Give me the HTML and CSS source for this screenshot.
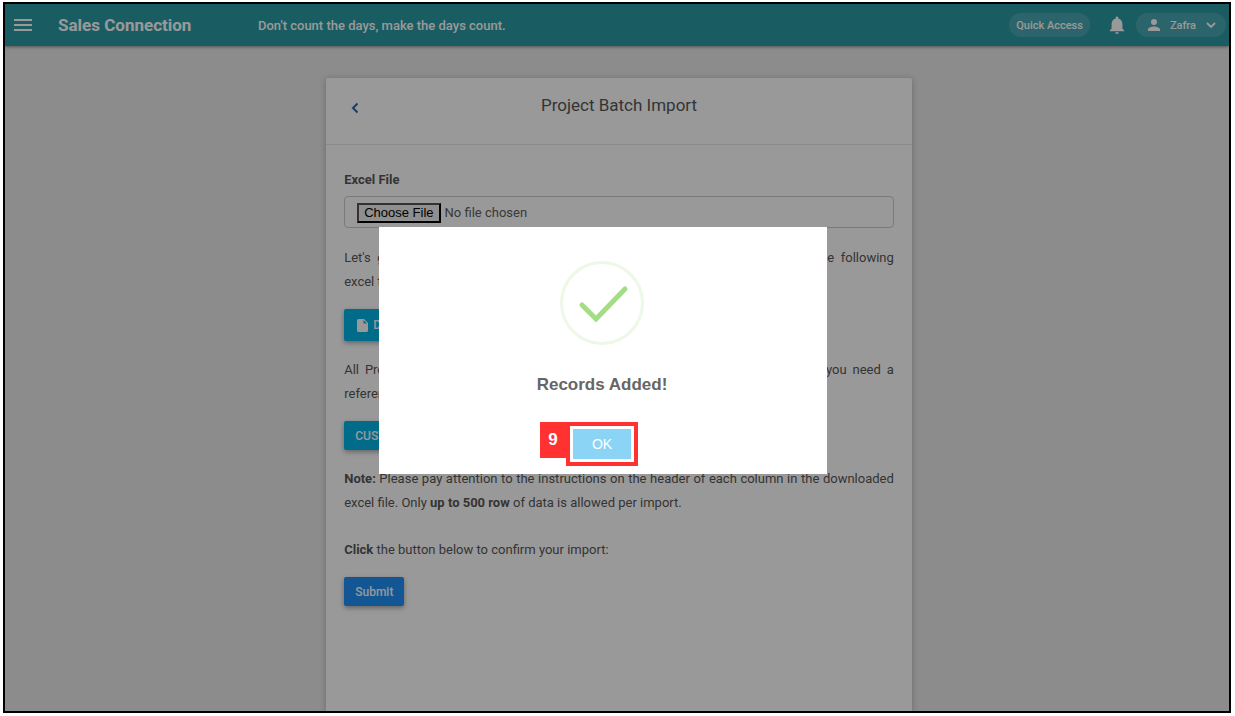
FILE: index.html
```html
<!DOCTYPE html>
<html lang="en">
<head>
<meta charset="utf-8">
<meta name="viewport" content="width=device-width, initial-scale=1">
<title>Project Batch Import</title>
<link rel="stylesheet" href="styles.css">
</head>
<body>
<div class="frame">
  <header class="topbar">
    <button class="menu-button" type="button" aria-label="Menu">
      <svg width="18" height="14" viewBox="0 0 18 14" aria-hidden="true"><path d="M0 1h18v2H0zM0 6h18v2H0zM0 11h18v2H0z" fill="currentColor"/></svg>
    </button>
    <div class="brand">Sales Connection</div>
    <div class="quote">Don't count the days, make the days count.</div>
    <button class="pill quick" type="button">Quick Access</button>
    <button class="bell" type="button" aria-label="Notifications">
      <svg width="16" height="18" viewBox="0 0 16 20" aria-hidden="true"><path d="M8 20a2 2 0 0 0 2-2H6a2 2 0 0 0 2 2zm6-6V9c0-3-1.600-5.600-4.500-6.300V2a1.500 1.500 0 0 0-3 0v.700C3.600 3.400 2 5.900 2 9v5l-2 2v1h16v-1z" fill="currentColor"/></svg>
    </button>
    <button class="pill user" type="button">
      <svg width="12" height="12" viewBox="0 0 12 12" aria-hidden="true"><path d="M6 6a3 3 0 1 0 0-6 3 3 0 0 0 0 6zm0 1.500c-2 0-6 1-6 3V12h12v-1.500c0-2-4-3-6-3z" fill="currentColor"/></svg>
      <span>Zafra</span>
      <svg width="10" height="6" viewBox="0 0 10 6" aria-hidden="true"><path d="M1 1l4 4 4-4" fill="none" stroke="currentColor" stroke-width="1.800"/></svg>
    </button>
  </header>

  <main class="page">
    <section class="card">
      <div class="card-head">
        <a class="back" href="#" aria-label="Back">
          <svg width="8" height="12" viewBox="0 0 8 12" aria-hidden="true"><path d="M6.500 1.500L2 6l4.500 4.500" fill="none" stroke="currentColor" stroke-width="2"/></svg>
        </a>
        <h1 class="card-title">Project Batch Import</h1>
      </div>
      <form class="card-body">
        <label class="label" for="excel">Excel File</label>
        <input class="file" id="excel" type="file">
        <p class="text">Let's get started by filling in your project data with our template. Download the following excel&nbsp;template:</p>
        <button class="btn info tall" type="button">
          <svg width="11" height="13" viewBox="0 0 11 13" aria-hidden="true"><path d="M1.500 0H7l4 4v7.500a1.500 1.500 0 0 1-1.500 1.500h-8A1.500 1.500 0 0 1 0 11.500v-10A1.500 1.500 0 0 1 1.500 0zM6.500 1v3.500H10z" fill="currentColor" fill-rule="evenodd"/></svg>
          DOWNLOAD
        </button>
        <p class="text">All Projects must be linked to a valid customer. Download the customer list if you need a reference:</p>
        <button class="btn info" type="button">CUSTOMER LIST</button>
        <p class="text note"><b>Note:</b> Please pay attention to the instructions on the header of each column in the downloaded excel file. Only <b>up to 500 row</b> of data is allowed per import.</p>
        <p class="text confirm"><b>Click</b> the button below to confirm your import:</p>
        <button class="btn primary" type="button">Submit</button>
      </form>
    </section>
  </main>

  <div class="overlay">
    <div class="modal" role="dialog" aria-modal="true" aria-labelledby="modal-title">
      <svg class="success" width="84" height="84" viewBox="0 0 84 84" aria-hidden="true">
        <circle cx="42" cy="42" r="40.500" fill="none" stroke="#edf8e7" stroke-width="3"/>
        <path d="M22 44l14 14 29-30" fill="none" stroke="#a5dc86" stroke-width="5" stroke-linecap="round" stroke-linejoin="miter"/>
      </svg>
      <h2 class="modal-title" id="modal-title">Records Added!</h2>
      <div class="marked">
        <span class="step">9</span>
        <button class="ok" type="button">OK</button>
      </div>
    </div>
  </div>
</div>
</body>
</html>
```
FILE: styles.css
```css
* {
  box-sizing: border-box;
}

body {
  display: flex;
  min-height: 100vh;
  margin: 0;
  padding: 2px 4px 3px 3px;
  background: #fff;
  color: #585858;
  font: 13px/23px Roboto, sans-serif;
}

button {
  border: 0;
  font-family: inherit;
  cursor: pointer;
}

svg {
  display: block;
  flex: none;
}

.frame {
  position: relative;
  display: flex;
  flex: 1;
  flex-direction: column;
  overflow: hidden;
  border: 2px solid #000;
  background: #e9e9e9;
}

.topbar {
  display: flex;
  align-items: center;
  height: 42px;
  padding: 0 3px 0 9px;
  background: #2a9ba5;
  box-shadow: 0 1px 3px rgba(0, 0, 0, 0.4);
  color: #fff;
}

.menu-button,
.bell {
  padding: 0;
  background: none;
  color: inherit;
}

.brand {
  width: 200px;
  margin-left: 26px;
  font-size: 17px;
  font-weight: 700;
}

.quote {
  flex: 1;
  font-size: 13px;
  font-weight: 500;
}

.pill {
  display: flex;
  align-items: center;
  height: 24px;
  padding: 0 7px;
  border-radius: 12px;
  background: rgba(255, 255, 255, 0.15);
  color: inherit;
  font-size: 11px;
  font-weight: 500;
}

.bell {
  margin: 0 11px 0 19px;
}

.user {
  gap: 10px;
  padding: 0 10px 0 12px;
}

.page {
  display: flex;
  flex: 1;
  justify-content: center;
  padding: 32px 0 0 4px;
}

.card {
  width: 48%;
  border-radius: 2px 2px 0 0;
  background: #fff;
  box-shadow: 0 1px 6px rgba(0, 0, 0, 0.25);
}

.card-head {
  display: grid;
  grid-template-columns: 24px 1fr 24px;
  height: 67px;
  padding: 16px 25px 0;
  border-bottom: 1px solid #e6e6e6;
}

.back {
  padding-top: 8px;
  color: #2468b0;
}

.card-title {
  margin: 0;
  font-size: 17px;
  font-weight: 400;
  line-height: 23px;
  text-align: center;
}

.card-body {
  display: flex;
  flex-direction: column;
  align-items: flex-start;
  padding: 23px 18px 24px;
}

.label {
  margin-bottom: 5px;
  font-weight: 700;
}

.file {
  width: 100%;
  height: 32px;
  margin-bottom: 18px;
  padding: 6px 12px;
  border: 1px solid #ccc;
  border-radius: 4px;
  color: #606060;
  font: 13px/20px Roboto, sans-serif;
}

.file::file-selector-button {
  height: 20px;
  padding: 0 5px;
  border: 2px outset #000;
  border-radius: 0;
  background: #efefef;
  color: #000;
  font: 13px/16px "Liberation Sans", Arial, sans-serif;
}

.text {
  width: 100%;
  margin: 0 0 15px;
  line-height: 24px;
  text-align: justify;
}

.text.note {
  margin-bottom: 23px;
}

.btn {
  display: flex;
  align-items: center;
  gap: 5px;
  height: 29px;
  margin-bottom: 17px;
  padding: 0 11px;
  border-radius: 2px;
  box-shadow: 0 2px 5px rgba(0, 0, 0, 0.35);
  color: #fff;
  font-size: 12px;
  font-weight: 500;
}

.btn.tall {
  height: 32px;
  padding: 0 13px;
}

.info {
  background: #00b5e5;
}

.primary {
  background: #1e90f5;
}

.overlay {
  position: absolute;
  inset: 0;
  display: flex;
  align-items: center;
  justify-content: center;
  padding: 0 28px 14px 0;
  background: rgba(0, 0, 0, 0.4);
}

.modal {
  display: flex;
  flex-direction: column;
  align-items: center;
  width: 448px;
  padding: 34px 18px 8px 16px;
  background: #fff;
  font-family: "Liberation Sans", Arial, sans-serif;
}

.modal-title {
  margin: 28px 0 26px;
  color: #666;
  font-size: 17px;
  font-weight: 700;
  line-height: 23px;
}

.marked {
  position: relative;
  padding: 3px;
  border: 4px solid #ff3131;
}

.step {
  position: absolute;
  top: -4px;
  right: 100%;
  width: 26px;
  height: 36px;
  margin-right: 4px;
  background: #ff3131;
  color: #fff;
  font-size: 17px;
  font-weight: 700;
  line-height: 36px;
  text-align: center;
}

.ok {
  display: block;
  width: 58px;
  height: 30px;
  background: #8cd4f5;
  color: #fff;
  font-size: 14px;
}
```
